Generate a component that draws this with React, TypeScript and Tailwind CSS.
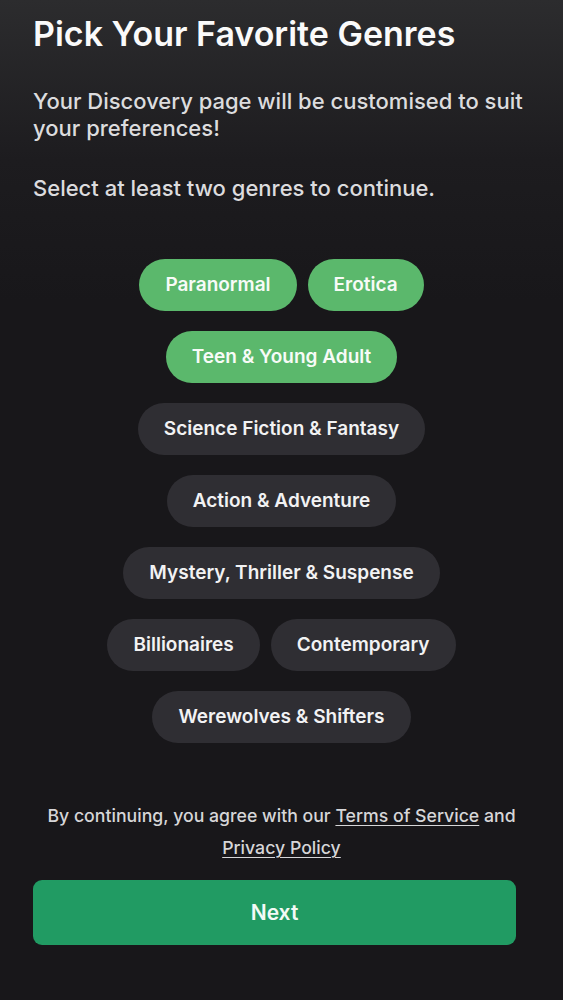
import React from "react";

const selected = ["Paranormal", "Erotica", "Teen & Young Adult"];
const genres = [
  "Paranormal",
  "Erotica",
  "Teen & Young Adult",
  "Science Fiction & Fantasy",
  "Action & Adventure",
  "Mystery, Thriller & Suspense",
  "Billionaires",
  "Contemporary",
  "Werewolves & Shifters",
];

export default function App() {
  return (
    <div
      className="min-h-[1000px] w-full bg-[linear-gradient(180deg,#2c2c2e_0px,#1d1c1f_160px,#18171a_300px,#18171a_100%)] text-white"
      style={{ fontFamily: "Inter, 'Noto Sans', sans-serif" }}
    >
      <div className="pl-[33px] pr-[33px] pt-[14px]">
        <h1 className="text-[34px] leading-[40px] font-semibold text-[#fafafa]">
          Pick Your Favorite Genres
        </h1>
        <p className="mt-[34px] text-[22px] leading-[27px] font-medium text-[#dcdcde]">
          Your Discovery page will be customised to suit your preferences!
        </p>
        <p className="mt-[33px] text-[22px] leading-[27px] font-medium text-[#dcdcde]">
          Select at least two genres to continue.
        </p>
      </div>

      <div className="mx-auto mt-[57px] flex w-[440px] flex-wrap justify-center gap-x-[11px] gap-y-[20px]">
        {genres.map((g) => {
          const on = selected.includes(g);
          return (
            <button
              key={g}
              className={
                "h-[52px] rounded-full px-[26px] text-[19px] font-semibold " +
                (on ? "bg-[#5bb86c] text-[#f7fbf7]" : "bg-[#2f2e33] text-[#f2f2f3]")
              }
            >
              {g}
            </button>
          );
        })}
      </div>

      <p className="mt-[57px] px-[20px] text-center text-[17.7px] leading-[32px] font-medium text-[#d6d6d8]">
        By continuing, you agree with our{" "}
        <a className="underline underline-offset-[3px] decoration-1">Terms of Service</a> and{" "}
        <a className="underline underline-offset-[3px] decoration-1">Privacy Policy</a>
      </p>

      <div className="mt-[16px] pl-[33px]">
        <button className="h-[65px] w-[483px] rounded-[9px] bg-[#219b63] text-[21px] font-semibold text-[#f3faf6]">
          Next
        </button>
      </div>
    </div>
  );
}
